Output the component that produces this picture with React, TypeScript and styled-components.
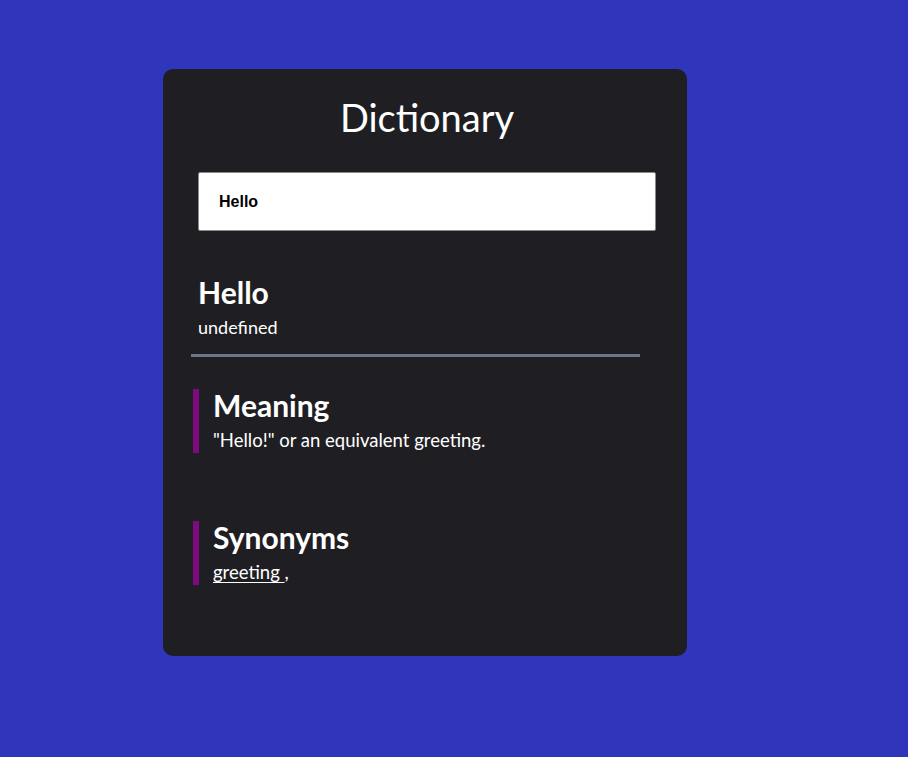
import React from "react";
import styled, { createGlobalStyle } from "styled-components";

const Global = createGlobalStyle`
  html, body {
    margin: 0;
    padding: 0;
    background: #2f36bb;
  }
  body {
    font-family: Lato, "Open Sans", sans-serif;
    color: #ffffff;
  }
`;

const Page = styled.div`
  min-height: 757px;
  padding: 69px 0 0 163px;
  box-sizing: border-box;
`;

const Card = styled.main`
  width: 524px;
  height: 587px;
  box-sizing: border-box;
  background: #1f1f23;
  border-radius: 10px;
  padding: 25px 31px 0 35px;
  display: flex;
  flex-direction: column;
`;

const Title = styled.h1`
  margin: 0;
  font-family: Lato, sans-serif;
  font-weight: 400;
  font-size: 38px;
  line-height: 47px;
  text-align: center;
  color: #ffffff;
`;

const SearchInput = styled.input`
  margin-top: 31px;
  width: 458px;
  height: 59px;
  box-sizing: border-box;
  border: 1px solid #8a8a8a;
  border-radius: 2px;
  background: #ffffff;
  padding: 0 20px;
  font-family: "Liberation Sans", Arial, sans-serif;
  font-weight: 700;
  font-size: 16px;
  color: #000000;
  outline: none;
`;

const Word = styled.h2`
  margin: 43px 0 0;
  font-family: Lato, sans-serif;
  font-weight: 700;
  font-size: 30px;
  line-height: 36px;
`;

const Body = styled.p`
  margin: 0;
  font-family: Lato, sans-serif;
  font-size: 18px;
  line-height: 22px;
`;

const Phonetic = styled(Body)`
  margin-top: 6px;
`;

const Divider = styled.hr`
  margin: 16px 0 0 -7px;
  width: 449px;
  height: 3px;
  border: none;
  background: #6b7488;
`;

const Section = styled.section<{ $top: number }>`
  margin: ${(p) => p.$top}px 0 0 -5px;
  border-left: 6px solid #7f0a7f;
  padding-left: 14px;
  height: 64px;
  box-sizing: border-box;
`;

const SectionTitle = styled.h3`
  margin: -2px 0 0;
  font-family: Lato, sans-serif;
  font-weight: 700;
  font-size: 30px;
  line-height: 36px;
`;

const Definition = styled(Body)`
  margin-top: 6px;
  font-size: 18.5px;
`;

const SynLink = styled.a`
  color: #ffffff;
  text-decoration: underline;
  text-underline-offset: 3px;
`;

export default function App() {
  return (
    <>
      <Global />
      <Page>
        <Card>
          <Title>Dictionary</Title>
          <SearchInput defaultValue="Hello" />
          <Word>Hello</Word>
          <Phonetic>undefined</Phonetic>
          <Divider />
          <Section $top={32}>
            <SectionTitle>Meaning</SectionTitle>
            <Definition>"Hello!" or an equivalent greeting.</Definition>
          </Section>
          <Section $top={68}>
            <SectionTitle>Synonyms</SectionTitle>
            <Definition>
              <SynLink href="#">greeting </SynLink>,
            </Definition>
          </Section>
        </Card>
      </Page>
    </>
  );
}
